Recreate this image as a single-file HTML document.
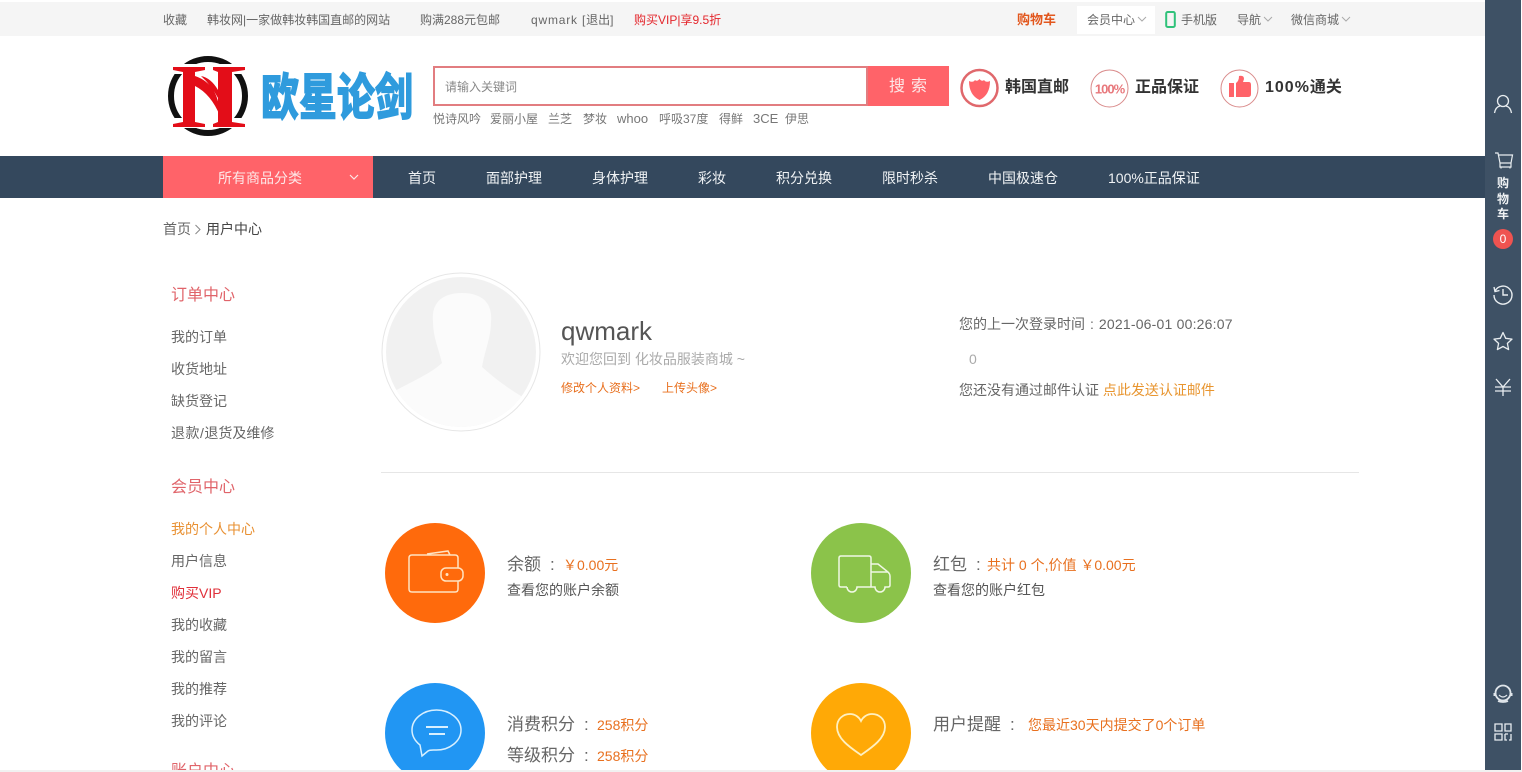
<!DOCTYPE html>
<html lang="zh-CN"><head><meta charset="utf-8"><title>用户中心</title>
<style>
html,body{margin:0;padding:0;width:1522px;height:772px;overflow:hidden;background:#fff}
body{position:relative;font-family:"Liberation Sans","Noto Sans CJK SC",sans-serif;color:#666}
.t{position:absolute;white-space:nowrap;font-size:13px;line-height:20px;height:20px;color:#666}
.b{position:absolute}
svg{position:absolute;overflow:visible}
.n{color:#f0f3f5;font-size:14px}
.o{color:#e8701f}
.g{font-size:14px;color:#666}
.c{margin-left:9px}
.k{font-size:12px;color:#777;top:109px}
</style></head><body>
<div class="b" style="left:0;top:2px;width:1485px;height:34px;background:#f5f5f5"></div>
<span class="t" style="left:163px;top:10px;font-size:12px">收藏</span>
<span class="t" style="left:207px;top:10px;font-size:12px">韩妆网|一家做韩妆韩国直邮的网站</span>
<span class="t" style="left:420px;top:10px;font-size:12px">购满288元包邮</span>
<span class="t" style="left:531px;top:10px;font-size:12px"><span style="letter-spacing:.8px">qwmark [</span>退出]</span>
<span class="t" style="left:634px;top:10px;font-size:12px;color:#e4262c">购买VIP|享9.5折</span>
<span class="t" style="left:1017px;top:10px;color:#e2571e;font-weight:700">购物车</span>
<div class="b" style="left:1077px;top:6px;width:78px;height:28px;background:#fff"></div>
<span class="t" style="left:1087px;top:10px;font-size:12px">会员中心</span>
<svg style="left:1137px;top:16px" width="10" height="6"><path d="M1 1l4 4 4-4" fill="none" stroke="#aaa"/></svg>
<svg style="left:1165px;top:11px" width="12" height="17"><rect x="1.200" y="1" width="8.600" height="15" rx="1.500" fill="none" stroke="#2fc27a" stroke-width="2"/></svg>
<span class="t" style="left:1181px;top:10px;font-size:12px">手机版</span>
<span class="t" style="left:1237px;top:10px;font-size:12px">导航</span>
<svg style="left:1263px;top:16px" width="10" height="6"><path d="M1 1l4 4 4-4" fill="none" stroke="#aaa"/></svg>
<span class="t" style="left:1291px;top:10px;font-size:12px">微信商城</span>
<svg style="left:1341px;top:16px" width="10" height="6"><path d="M1 1l4 4 4-4" fill="none" stroke="#aaa"/></svg>

<svg style="left:163px;top:52px" width="90" height="86" viewBox="0 0 90 86">
<ellipse cx="45" cy="44" rx="37" ry="37" fill="none" stroke="#111" stroke-width="6"/>
<rect x="0" y="12" width="90" height="10" fill="#fff"/><rect x="0" y="66" width="90" height="10" fill="#fff"/>
<path d="M10 15H42V18L32 20V70L42 72V75H10V72L20 70V20L10 18zM50 15H82V18L69 20V70L82 72V75H50V72L55 70V20L50 18z" fill="#e30d18"/>
<path d="M32 24Q56 32 57 64Q48 42 32 34zM38 24Q48 26 55 38V46Q48 33 38 24z" fill="#e30d18"/>
</svg>
<svg style="left:260px;top:70px" width="155" height="54"><text x="1" y="45" font-family="'Noto Sans CJK SC',sans-serif" font-weight="900" font-size="50" fill="#2f9bdd" stroke="#2f9bdd" stroke-width="1" textLength="152" lengthAdjust="spacingAndGlyphs">欧星论剑</text></svg>

<div class="b" style="left:433px;top:66px;width:431px;height:36px;border:2px solid #e27d80;background:#fff"></div>
<div class="b" style="left:868px;top:66px;width:81px;height:40px;background:#ff6369"></div>
<span class="t" style="left:445px;top:77px;font-size:12px;color:#888">请输入关键词</span>
<span class="t" style="left:889px;top:77px;font-size:16px;color:#fde8e8;letter-spacing:6px">搜索</span>
<span class="t k" style="left:433px">悦诗风吟</span>
<span class="t k" style="left:490px">爱丽小屋</span>
<span class="t k" style="left:548px">兰芝</span>
<span class="t k" style="left:583px">梦妆</span>
<span class="t k" style="left:617px;font-size:13px">whoo</span>
<span class="t k" style="left:659px">呼吸37度</span>
<span class="t k" style="left:719px">得鲜</span>
<span class="t k" style="left:753px;font-size:13px">3CE</span>
<span class="t k" style="left:785px">伊思</span>

<svg style="left:960px;top:68px" width="40" height="40"><circle cx="19.500" cy="20" r="18" fill="#fff" stroke="#e0686c" stroke-width="2.500"/><path d="M9 13q4 2 6-1 2 2 4.500-1 2.500 3 4.500 1 2 3 6 1 0 14-10.500 19Q9 27 9 13z" fill="#ff6369"/></svg>
<span class="t" style="left:1005px;top:80px;font-size:16px;font-weight:700;color:#333;line-height:16px">韩国直邮</span>
<svg style="left:1090px;top:69px" width="40" height="39"><circle cx="19.500" cy="19.500" r="18.500" fill="#fff" stroke="#d98a8a"/><text x="19.500" y="24.500" text-anchor="middle" font-size="13" font-weight="700" letter-spacing="-1" font-family="Liberation Sans" fill="#e8787c">100%</text></svg>
<span class="t" style="left:1135px;top:80px;font-size:16px;font-weight:700;color:#333;line-height:16px">正品保证</span>
<svg style="left:1220px;top:69px" width="40" height="39"><circle cx="19.500" cy="19.500" r="18.500" fill="#fff" stroke="#d98a8a"/><path d="M9 14h5v14H9zM16 14q3-2 3-7 5-1 5 3l-1 3h6q2 0 2 3v9q0 3-3 3H16z" fill="#ff6369"/></svg>
<span class="t" style="left:1265px;top:80px;font-size:16px;font-weight:700;color:#333;line-height:16px"><span style="letter-spacing:1px">100%</span>通关</span>

<div class="b" style="left:0;top:156px;width:1485px;height:42px;background:#34485d"></div>
<div class="b" style="left:163px;top:156px;width:210px;height:42px;background:#ff6369"></div>
<span class="t n" style="left:218px;top:168px;color:#fde8e8">所有商品分类</span>
<svg style="left:349px;top:174px" width="10" height="7"><path d="M1 1l4 4 4-4" fill="none" stroke="#fde8e8" stroke-width="1.200"/></svg>
<span class="t n" style="left:408px;top:168px">首页</span>
<span class="t n" style="left:486px;top:168px">面部护理</span>
<span class="t n" style="left:592px;top:168px">身体护理</span>
<span class="t n" style="left:698px;top:168px">彩妆</span>
<span class="t n" style="left:776px;top:168px">积分兑换</span>
<span class="t n" style="left:882px;top:168px">限时秒杀</span>
<span class="t n" style="left:988px;top:168px">中国极速仓</span>
<span class="t n" style="left:1108px;top:168px">100%正品保证</span>

<span class="t" style="left:163px;top:219px;font-size:14px">首页</span>
<svg style="left:194px;top:224px" width="8" height="11"><path d="M1.500 1l4.500 4.500-4.500 4.500" fill="none" stroke="#888"/></svg>
<span class="t" style="left:206px;top:219px;color:#444;font-size:14px">用户中心</span>

<span class="t" style="left:171px;top:286px;font-size:16px;color:#e0646a">订单中心</span>
<span class="t g" style="left:171px;top:327px">我的订单</span>
<span class="t g" style="left:171px;top:359px">收货地址</span>
<span class="t g" style="left:171px;top:391px">缺货登记</span>
<span class="t g" style="left:171px;top:423px"><span style="letter-spacing:.5px">退款/</span>退货及维修</span>
<span class="t" style="left:171px;top:478px;font-size:16px;color:#e0646a">会员中心</span>
<span class="t g" style="left:171px;top:519px;color:#e89032">我的个人中心</span>
<span class="t g" style="left:171px;top:551px">用户信息</span>
<span class="t g" style="left:171px;top:583px;color:#e0303a">购买VIP</span>
<span class="t g" style="left:171px;top:615px">我的收藏</span>
<span class="t g" style="left:171px;top:647px">我的留言</span>
<span class="t g" style="left:171px;top:679px">我的推荐</span>
<span class="t g" style="left:171px;top:711px">我的评论</span>
<span class="t" style="left:171px;top:762px;font-size:16px;color:#e0646a">账户中心</span>

<svg style="left:381px;top:272px" width="160" height="160" viewBox="0 0 160 160">
<defs><clipPath id="c"><circle cx="80" cy="80" r="75"/></clipPath></defs>
<circle cx="80" cy="80" r="79" fill="#fff" stroke="#e6e6e6"/>
<circle cx="80" cy="80" r="75" fill="#f1f1f1"/>
<g clip-path="url(#c)" fill="#fbfbfb"><path d="M52 50C50 30 62 21 81 21C100 21 112 30 110 50C110 65 104 78 101 95C112 105 125 115 140 124V160H5V124C25 112 50 102 61 91C58 78 52 65 52 50Z"/></g>
</svg>
<span class="t" style="left:561px;top:316px;font-size:26px;line-height:30px;height:30px;color:#555">qwmark</span>
<span class="t" style="left:561px;top:349px;font-size:14px;color:#aaa">欢迎您回到 化妆品服装商城 ~</span>
<span class="t o" style="left:561px;top:378px;font-size:12px">修改个人资料&gt;</span>
<span class="t o" style="left:662px;top:378px;font-size:12px">上传头像&gt;</span>
<span class="t" style="left:959px;top:314px;font-size:14px">您的上一次登录时间<span style="margin:0 5px">:</span><span style="letter-spacing:.2px">2021-06-01 00:26:07</span></span>
<span class="t" style="left:969px;top:349px;font-size:14px;color:#aaa">0</span>
<span class="t" style="left:959px;top:380px;font-size:14px">您还没有通过邮件认证 <span style="color:#e8952f">点此发送认证邮件</span></span>
<div class="b" style="left:381px;top:472px;width:978px;height:1px;background:#e6e6e6"></div>

<div class="b" style="left:385px;top:523px;width:100px;height:100px;border-radius:50%;background:#ff6a0c"></div>
<svg style="left:385px;top:523px" width="100" height="100" fill="none" stroke="#ffe3c2" stroke-width="1.500"><path d="M42 31L63 28L65 32M73 45V35Q73 32 70 32H27Q24 32 24 35V66Q24 69 27 69H70Q73 69 73 66V58"/><rect x="56" y="45" width="22" height="13" rx="5"/><circle cx="62" cy="51.500" r="1.500" fill="#ffe3c2" stroke="none"/></svg>
<span class="t" style="left:507px;top:555px;font-size:17px">余额<span class="c">:</span></span>
<span class="t o" style="left:563px;top:555px;font-size:14px">￥0.00元</span>
<span class="t" style="left:507px;top:580px;font-size:14px;color:#555">查看您的账户余额</span>

<div class="b" style="left:811px;top:523px;width:100px;height:100px;border-radius:50%;background:#8bc34a"></div>
<svg style="left:811px;top:523px" width="100" height="100" fill="none" stroke="#f0f8e4" stroke-width="1.500"><path d="M36 64H30Q28 64 28 62V35Q28 33 30 33H58Q60 33 60 35V64M36 64A5 5 0 0 0 46 64H64A5 5 0 0 0 74 64H77Q79 64 79 62V53Q79 51 77 49L67 41H60M60 49H77"/></svg>
<span class="t" style="left:933px;top:555px;font-size:17px">红包<span class="c">:</span></span>
<span class="t o" style="left:987px;top:555px;font-size:14px">共计 0 个,价值 ￥0.00元</span>
<span class="t" style="left:933px;top:580px;font-size:14px;color:#555">查看您的账户红包</span>

<div class="b" style="left:385px;top:683px;width:100px;height:100px;border-radius:50%;background:#2196f3"></div>
<svg style="left:385px;top:683px" width="100" height="100" fill="none" stroke="#d8f0ff" stroke-width="1.500"><path d="M35 62C30 58 27 53 27 47C27 36 38 27 51.500 27S76 36 76 47S65 67 51.500 67C48 67 45 66.500 43 68L37 73Z"/><path d="M41 44H63M44 51H60" stroke-width="2"/></svg>
<span class="t" style="left:507px;top:715px;font-size:17px">消费积分<span class="c">:</span></span>
<span class="t o" style="left:597px;top:715px;font-size:14px">258积分</span>
<span class="t" style="left:507px;top:746px;font-size:17px">等级积分<span class="c">:</span></span>
<span class="t o" style="left:597px;top:746px;font-size:14px">258积分</span>

<div class="b" style="left:811px;top:683px;width:100px;height:100px;border-radius:50%;background:#ffa906"></div>
<svg style="left:811px;top:683px" width="100" height="100" fill="none" stroke="#fff0c0" stroke-width="1.800"><path d="M50 72C40 65 26 56 26 44C26 36 32 31 39 31C44 31 48 34 50 38C52 34 56 31 61 31C68 31 74 36 74 44C74 56 60 65 50 72Z"/></svg>
<span class="t" style="left:933px;top:715px;font-size:17px">用户提醒<span class="c">:</span></span>
<span class="t o" style="left:1028px;top:715px;font-size:14px">您最近30天内提交了0个订单</span>

<div class="b" style="left:1485px;top:0;width:36px;height:772px;background:#3e5165"></div>
<svg style="left:1493px;top:94px" width="20" height="20" fill="none" stroke="#e8edf0" stroke-width="1.300"><circle cx="10" cy="7" r="5.500"/><path d="M1.500 19q1-6 5.500-7M18.500 19q-1-6-5.500-7"/></svg>
<svg style="left:1494px;top:152px" width="20" height="18" fill="none" stroke="#e8edf0" stroke-width="1.200"><path d="M1 1h3l2 10h11l1.500-8H4.500M6 11v4h11v-4M7 15v1.500M16 15v1.500"/></svg>
<span class="t" style="left:1497px;top:176px;font-size:12px;line-height:15.500px;height:50px;white-space:normal;width:12px;color:#f0f3f5;font-weight:700">购<br>物<br>车</span>
<div class="b" style="left:1493px;top:229px;width:20px;height:20px;border-radius:50%;background:#ef5350;color:#fff;font-size:12px;line-height:20px;text-align:center">0</div>
<svg style="left:1493px;top:284px" width="20" height="20" fill="none" stroke="#e8edf0" stroke-width="1.400"><path d="M2 7a9 9 0 1 1-1 4M1 3l1 4.500 4.500-1M10 5v6h5"/></svg>
<svg style="left:1493px;top:331px" width="20" height="20" fill="none" stroke="#e8edf0" stroke-width="1.300"><path d="M10 1.500l2.700 5.800 6.300.8-4.600 4.300 1.200 6.200L10 15.500l-5.600 3.100 1.200-6.200L1 8.100l6.300-.8z" stroke-linejoin="round"/></svg>
<svg style="left:1494px;top:378px" width="18" height="18" fill="none" stroke="#e8edf0" stroke-width="1.300"><path d="M2 1l7 8 7-8M1 9h16M1 13h16M9 9v9"/></svg>
<svg style="left:1493px;top:684px" width="20" height="20" fill="none" stroke="#dfe5ea" stroke-width="1.800"><circle cx="10" cy="9" r="7.500"/><path d="M6 11q4 4 8 0" stroke-width="1.200"/><path d="M2 9v3M18 9v3" stroke-width="3"/><path d="M5 17q5 2 10 0"/></svg>
<svg style="left:1493px;top:722px" width="20" height="20" fill="none" stroke="#e8edf0" stroke-width="1.300"><path d="M2 2h7v7H2zM12 2h6v7h-6zM2 12h7v6H2zM12 12v6h2M18 12v6h-2M12 12h3"/></svg>
<div class="b" style="left:0;top:770px;width:1522px;height:2px;background:#f1f1f1"></div>
</body></html>
